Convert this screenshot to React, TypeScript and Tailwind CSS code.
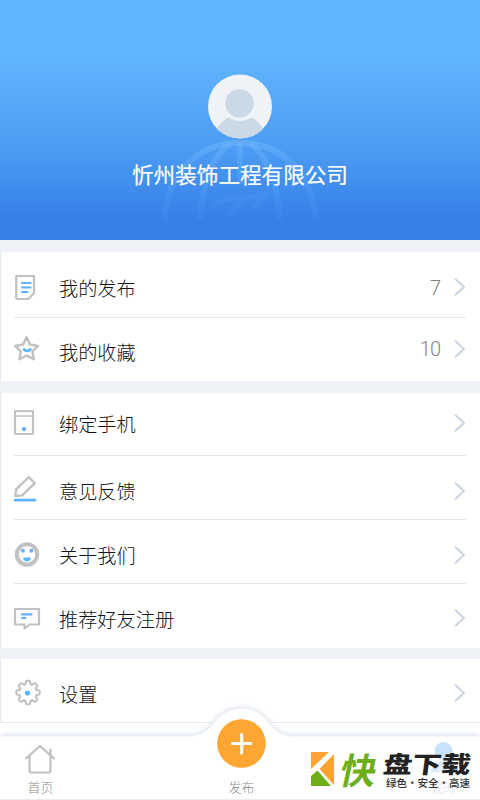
import React from "react";

type Item = {
  name: string;
  icon: React.ReactNode;
  row: string;
  value?: string;
  valueShift?: string;
  arrow?: string;
};

const GRAY = "#c0c1c2";
const BLUE = "#62b3ff";

function Glyph({ children }: { children: React.ReactNode }) {
  return (
    <svg
      width="28"
      height="28"
      viewBox="0 0 28 28"
      fill="none"
      stroke={GRAY}
      strokeWidth="2.2"
      strokeLinejoin="round"
      strokeLinecap="round"
      className="shrink-0 overflow-visible"
    >
      {children}
    </svg>
  );
}

const DocIcon = (
  <Glyph>
    <path d="M2.200 2H20v17.200L14.300 25H3.200L2.200 24z" />
    <path d="M8 9h8.500M8 13.500h8.500M8 18h5.500" stroke={BLUE} />
  </Glyph>
);

const StarIcon = (
  <Glyph>
    <path
      d="M12.600-.600l3.600 7.200 7.900 1.300-5.700 5.500 1.400 7.800-7.200-3.700-7.200 3.700 1.400-7.800L1.100 7.900 9 6.600z"
      strokeWidth="2.500"
    />
    <path d="M10.200 11.600c1.300 1.500 4.700 1.500 6 0" stroke={BLUE} strokeWidth="2.900" />
  </Glyph>
);

const PhoneIcon = (
  <Glyph>
    <rect x="1" y="1" width="18" height="23" rx="0.600" />
    <path d="M1 6h18" strokeWidth="1.700" />
    <circle cx="10" cy="19.200" r="2.100" fill={BLUE} stroke="none" />
  </Glyph>
);

const PencilIcon = (
  <Glyph>
    <path d="M14.600.200l6.200 6L8.200 18.400l-6.900.800.800-6.800z" strokeWidth="2.300" />
    <path d="M1.200 23.200h19.600" stroke={BLUE} strokeWidth="2.700" />
  </Glyph>
);

const SmileIcon = (
  <Glyph>
    <circle cx="13" cy="13.500" r="10.200" strokeWidth="4" />
    <circle cx="8.900" cy="9.700" r="2" fill={BLUE} stroke="none" />
    <circle cx="17.300" cy="9.700" r="2" fill={BLUE} stroke="none" />
    <path d="M9.200 16.500h7.600c0 2.400-1.600 4-3.800 4s-3.800-1.600-3.800-4z" fill={BLUE} stroke="none" />
  </Glyph>
);

const BubbleIcon = (
  <Glyph>
    <path d="M1 4h24v15.500h-9.500l-5 4v-4H1z" />
    <path d="M8 9.400h9.500M8 13h3.500" stroke={BLUE} />
  </Glyph>
);

const teeth = [0, 45, 90, 135, 180, 225, 270, 315];

const GearIcon = (
  <Glyph>
    {teeth.map((deg) => (
      <path
        key={deg}
        d="M10.050 4.760Q11.900 4.200 11.900 1.700Q11.900.800 12.800.800H15.200Q16.100.800 16.100 1.700Q16.100 4.200 17.950 4.760"
        transform={`rotate(${deg} 14 12.500)`}
        strokeWidth="2"
      />
    ))}
    <circle cx="13.500" cy="13" r="2.600" fill={BLUE} stroke="none" />
  </Glyph>
);

const groups: { className: string; items: Item[] }[] = [
  {
    className: "mt-3",
    items: [
      { name: "我的发布", icon: DocIcon, row: "h-[66px] pt-[7px]", value: "7", arrow: "-mt-[3px]" },
      { name: "我的收藏", icon: StarIcon, row: "h-[63px] pt-[5px]", value: "10", valueShift: "-mt-[6px]", arrow: "-mt-[7px]" },
    ],
  },
  {
    className: "mt-3",
    items: [
      { name: "绑定手机", icon: PhoneIcon, row: "h-[63px]", arrow: "-mt-[2px]" },
      { name: "意见反馈", icon: PencilIcon, row: "h-16 pt-[7px]" },
      { name: "关于我们", icon: SmileIcon, row: "h-16 pt-[7px]" },
      { name: "推荐好友注册", icon: BubbleIcon, row: "h-16 pt-[6px]", arrow: "-mt-[2px]" },
    ],
  },
  {
    className: "mt-[11px]",
    items: [{ name: "设置", icon: GearIcon, row: "h-[63px] pt-[7px]", arrow: "-mt-[2px]" }],
  },
];

function Header() {
  return (
    <header className="relative h-60 bg-[linear-gradient(180deg,#62b5ff_0px,#62b5ff_56px,#4b9bf3_150px,#3780e8_218px,#3780e8_240px)]">
      {/* globe watermark */}
      <svg
        width="160"
        height="90"
        viewBox="0 0 160 90"
        fill="none"
        stroke="url(#globe)"
        strokeWidth="6"
        className="absolute left-[160px] top-[138px]"
      >
        <defs>
          <linearGradient id="globe" x1="0" y1="0" x2="0" y2="90" gradientUnits="userSpaceOnUse">
            <stop offset="0" stopColor="#7cc0ff" stopOpacity="0.4" />
            <stop offset="0.6" stopColor="#5aa8ff" stopOpacity="0.25" />
            <stop offset="1" stopColor="#5aa8ff" stopOpacity="0.05" />
          </linearGradient>
        </defs>
        <path d="M5 82C6 36 38 5 80 5s74 31 75 77" />
        <path d="M40 82C42 50 50 20 70 6M120 82C118 50 110 20 90 6M79.900 5L80 46" />
        <path d="M52 68c10-7 20-10 32-7l-14 16M84 61l20-4-10 14" strokeOpacity="0.7" />
      </svg>
      <div className="relative flex flex-col items-center pt-[74px]">
        <svg width="64" height="65" viewBox="0 0 64 65">
          <defs>
            <clipPath id="face">
              <circle cx="32" cy="32.500" r="32" />
            </clipPath>
          </defs>
          <g clipPath="url(#face)">
            <rect width="64" height="65" fill="#eff3f7" />
            <path d="M7.500 57c3-6 8-11 13-13.500 7 4.500 16 4.500 23 0 5 2.500 10 7 13 13.500v8h-49z" fill="#cbd8e5" />
            <circle cx="31.500" cy="29.500" r="14.200" fill="#cbd8e5" />
          </g>
        </svg>
        <h1 className="mt-[19px] text-[21.6px] font-normal leading-8 text-white [-webkit-text-stroke:0.2px_white]">
          忻州装饰工程有限公司
        </h1>
      </div>
    </header>
  );
}

function MenuRow({ item, last }: { item: Item; last: boolean }) {
  return (
    <div className={`flex items-center ${item.row} ${last ? "" : "border-b border-[#e4e6e9]"}`}>
      {item.icon}
      <span className="-mt-px ml-[17px] flex-1 text-[19.2px] font-light leading-7 text-[#101215]">{item.name}</span>
      {item.value && (
        <span className={`mr-[14px] font-[Roboto,sans-serif] text-[20px] font-light leading-7 tracking-[-1px] text-[#808386] ${item.valueShift ?? ""}`}>
          {item.value}
        </span>
      )}
      <svg
        width="12"
        height="18"
        viewBox="0 0 12 18"
        fill="none"
        stroke="#c5d3e2"
        strokeWidth="1.900"
        className={`shrink-0 ${item.arrow ?? ""}`}
      >
        <path d="M1 .800L10 9l-9 8.200" />
      </svg>
    </div>
  );
}

function Watermark() {
  return (
    <div className="absolute left-[311px] top-[29px] flex">
      <svg width="24" height="34" viewBox="0 0 24 34">
        <path d="M0 0h18L0 17z" fill="#ffa133" />
        <path d="M23 2v31L8.500 17z" fill="#ffa133" />
        <path d="M0 24l6.500-5.500L20 34H0z" fill="#6fae1b" />
      </svg>
      <span className="-mt-[2px] ml-[6px] w-[37px] -skew-x-12 text-[36px] font-bold leading-9 text-[#6fae1b]">快</span>
      <div className="-mt-px ml-[7px] w-[90px]">
        <div className="h-[24px] origin-top-left -skew-x-6 scale-x-[1.24] whitespace-nowrap text-[23.5px] font-black leading-[24px] text-[#222]">
          盘下载
        </div>
        <div className="ml-px mt-[2px] flex w-[84px] justify-between whitespace-nowrap text-[10.5px] font-medium leading-[12px] text-[#333]">
          <span>绿色</span>
          <span>·</span>
          <span>安全</span>
          <span>·</span>
          <span>高速</span>
        </div>
      </div>
    </div>
  );
}

function TabBar() {
  return (
    <nav className="relative h-[77px] border-b border-[#edf0f3]">
      {/* bar outline with the raised centre */}
      <svg width="480" height="98" viewBox="0 0 480 98" className="absolute left-0 -top-[21px]">
        <defs>
          <filter id="soft" x="-5%" y="-30%" width="110%" height="160%">
            <feGaussianBlur stdDeviation="2" />
          </filter>
        </defs>
        <path
          d="M0 32H186C204 32 208 25 214 18C227 0 256 0 269 18C275 25 279 32 297 32H480V97H0z"
          fill="#e2e8f0"
          filter="url(#soft)"
        />
        <path
          d="M0 34.500H186C204 34.500 209 27 215 20C228 2 255 2 268 20C274 27 279 34.500 297 34.500H480V97H0z"
          fill="#fff"
        />
      </svg>
      <div className="relative flex h-full text-[13px] font-light leading-[18px] text-[#8c8c8c]">
        <div className="flex w-20 flex-col items-center pt-[21px]">
          <svg width="32" height="30" viewBox="0 0 32 30" fill="none" stroke={GRAY} strokeWidth="2.200" strokeLinecap="round" strokeLinejoin="round">
            <path d="M2 14.500L16 2l14 12.500M5.500 12v14.500q0 2 2 2h17q2 0 2-2V12" />
            <path d="M26.500 10.500V5.500" />
          </svg>
          <span className="ml-px mt-[4px]">首页</span>
        </div>
        <div className="flex flex-1 flex-col items-center pl-[3px]">
          <svg width="50" height="50" viewBox="0 0 50 50" className="-mt-[4px]">
            <circle cx="24.500" cy="24.500" r="24.300" fill="#ffa531" />
            <path d="M15.500 24.500h18.500M24.700 15.500v18.500" stroke="#fff" strokeWidth="3" strokeLinecap="round" />
          </svg>
          <span className="mt-[9px]">发布</span>
        </div>
        <div className="flex w-20 flex-col items-center pl-[6px] pt-[19px]">
          <svg width="32" height="32" viewBox="0 0 32 32" fill="#79b6f7">
            <circle cx="16.500" cy="9" r="9" opacity="0.4" />
            <path d="M4 30q1-11 12.500-12 11.500 1 12.500 12z" opacity="0.25" />
          </svg>
          <span className="mt-[4px] text-[#dbe5f0]">我的</span>
        </div>
      </div>
      <Watermark />
    </nav>
  );
}

export default function App() {
  return (
    <div className="h-[800px] w-[480px] overflow-hidden bg-[#eef2f6] font-['Noto_Sans_CJK_SC',sans-serif]">
      <Header />
      {groups.map((group) => (
        <section key={group.items[0].name} className={`border-l border-[#e4e9ef] bg-white pl-[13px] pr-[14px] ${group.className}`}>
          {group.items.map((item, i) => (
            <MenuRow key={item.name} item={item} last={i === group.items.length - 1} />
          ))}
        </section>
      ))}
      <div className="border-t border-[#e6e9ee] bg-white">
        <TabBar />
      </div>
    </div>
  );
}
